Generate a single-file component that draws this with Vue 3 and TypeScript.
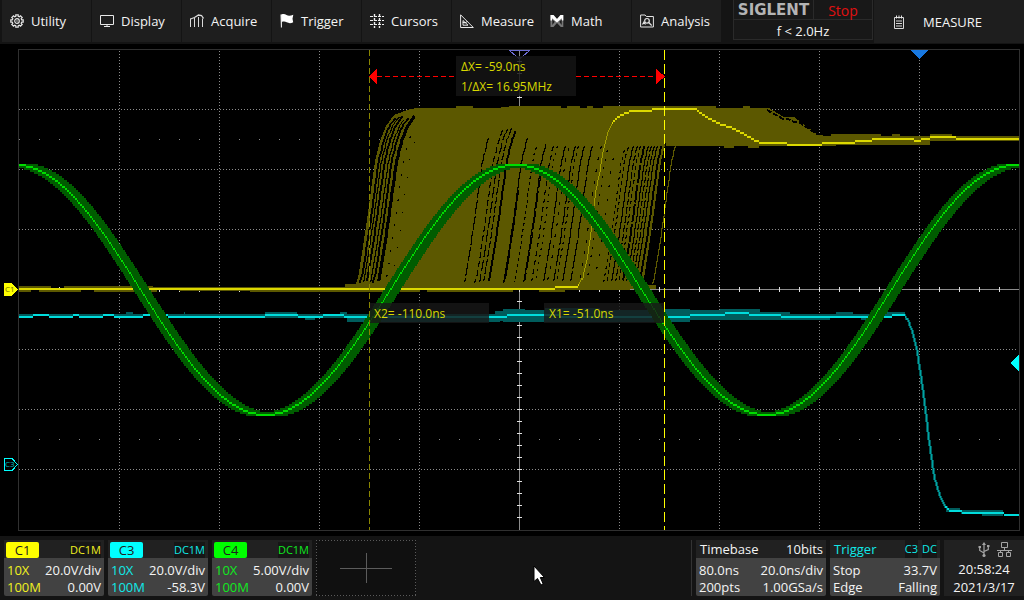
<script setup lang="ts">
type Point = [number, number]
type Rect = [number, number, number, number]

interface Channel {
  id: string
  tone: string
  coupling: string
  probe: string
  scale: string
  bandwidth: string
  offset: string
}

const menu = ['Utility', 'Display', 'Acquire', 'Trigger', 'Cursors', 'Measure', 'Math', 'Analysis']

const channels: Channel[] = [
  { id: 'C1', tone: 'yellow', coupling: 'DC1M', probe: '10X', scale: '20.0V/div', bandwidth: '100M', offset: '0.00V' },
  { id: 'C3', tone: 'cyan', coupling: 'DC1M', probe: '10X', scale: '20.0V/div', bandwidth: '100M', offset: '-58.3V' },
  { id: 'C4', tone: 'green', coupling: 'DC1M', probe: '10X', scale: '5.00V/div', bandwidth: '100M', offset: '0.00V' },
]

const range = (from: number, to: number, step: number): number[] => {
  const out: number[] = []
  for (let v = from; v <= to; v += step) out.push(v)
  return out
}

const columns = [119, 219, 319, 419, 619, 719, 819, 919]
const rows = [109, 169, 229, 349, 409, 469]
const hTicks = range(39, 1000, 20)
const vTicks = range(61, 526, 12)

const snap = (v: number): number => Math.round(v / 2) * 2

// Samples are drawn one column at a time, two pixels high at least.
function trace(f: (x: number) => number, from: number, to: number): string {
  let d = ''
  for (let x = from; x < to; x++) {
    const a = snap(f(x))
    const b = snap(f(x + 1))
    const top = Math.min(a, b)
    const h = Math.max(2, Math.abs(a - b))
    d += `M${x} ${top}h1v${h}h-1z`
  }
  return d
}

function interpolate(points: Point[]): (x: number) => number {
  return (x: number) => {
    if (x <= points[0][0]) return points[0][1]
    for (let i = 1; i < points.length; i++) {
      const [x0, y0] = points[i - 1]
      const [x1, y1] = points[i]
      if (x <= x1) return y0 + ((y1 - y0) * (x - x0)) / (x1 - x0)
    }
    return points[points.length - 1][1]
  }
}

const boxes = (list: Rect[]): string =>
  list.map(([x0, x1, y0, y1]) => `M${x0} ${y0}H${x1}V${y1}H${x0}z`).join('')

// C4: sine wave with jitter band
const sine = (x: number): number => 289 - 125 * Math.cos(((x - 516) * 2 * Math.PI) / 501)
const sineLine = trace(sine, 19, 1019)
const sineBand = (() => {
  let d = ''
  for (let x = 19; x < 1019; x++) {
    let lo = Infinity
    let hi = -Infinity
    for (let s = -6; s <= 8; s++) {
      const y = sine(x - s)
      lo = Math.min(lo, y)
      hi = Math.max(hi, y)
    }
    const a = snap(lo - 1)
    const b = snap(hi + 3)
    d += `M${x} ${a}h1V${b}h-1z`
  }
  return d
})()

// C1: step edge
const c1Points: Point[] = [
  [555, 288], [556, 286], [578, 286], [583, 277], [587, 260], [590, 240], [593, 215], [596, 190], [600, 171],
  [603, 151], [608, 132], [613, 122], [618, 116], [626, 112], [633, 110], [652, 110], [653, 108], [695, 108],
  [703, 114], [713, 120], [720, 123], [732, 127], [742, 132], [755, 140], [762, 142], [786, 142], [787, 144],
  [822, 144], [823, 142], [855, 142], [856, 140], [872, 140], [873, 138], [913, 138], [914, 140], [921, 140],
  [922, 138], [930, 138], [931, 136], [955, 136], [956, 138], [1019, 138],
]
const c1 = interpolate(c1Points)
const c1Flat = trace(c1, 19, 579)
const c1Rise = trace(c1, 579, 612)
const c1Top = trace(c1, 612, 1019)

// Horizontal shift of a rising edge at each height
const edge: Point[] = [
  [55, 109], [39, 115], [31, 126], [25, 141], [20, 161], [16, 190], [12, 220], [7, 253], [3, 278], [0, 286],
]
const edgeShift = (y: number): number => {
  for (let i = 1; i < edge.length; i++) {
    const [d0, y0] = edge[i - 1]
    const [d1, y1] = edge[i]
    if (y <= y1) return d0 + ((d1 - d0) * (y - y0)) / (y1 - y0)
  }
  return 0
}
const stroke = (base: number, top: number, bottom: number): string => {
  let d = ''
  for (let y = top; y <= bottom; y += 3) d += `${d ? 'L' : 'M'}${Math.round(base + edgeShift(y))}.5 ${y}`
  return d
}

const leftEdge = edge.slice().reverse().map(([d, y]) => `${355 + d} ${y}`).join('L')
const rightEdge = edge.slice(3).map(([d, y]) => `${641 + d} ${y}`).join('L')
const cloud =
  `M${leftEdge}L417 108H456V106H473V108H501V107H509V106H561V108H567V106H580V108H587V106H593V108H603V106` +
  `H716V108H743V106H750V108H769L784 117H794L818 135H823V146H672L666 146L${rightEdge}z`

interface Gap {
  d: string
  width: number
  dash: string
}
const gap = (base: number, top: number, width = 1, dash = 'none', bottom = 283): Gap => ({
  d: stroke(base, top, bottom),
  width,
  dash,
})
const gaps: Gap[] = [
  gap(358, 118, 2), gap(361, 117, 1), gap(364, 116, 2), gap(368, 120, 1), gap(371, 118, 2), gap(376, 116, 3),
  gap(383, 136, 1, '2 11'), gap(389, 142, 1, '1 17'),
  gap(462, 138, 1, '14 2'), gap(473, 130, 1, '6 3'), gap(477, 129, 1, '12 3'), gap(481, 128, 1, '7 2'),
  gap(486, 131, 2), gap(501, 138, 1), gap(502, 190, 1), gap(512, 147, 1, '3 3'), gap(521, 144, 1),
  gap(522, 170, 1, '18 3'), gap(529, 146, 1, '5 4'), gap(533, 146, 1, '2 5'), gap(541, 146, 1, '22 2'),
  gap(545, 148, 1, '3 8'), gap(551, 146, 1, '18 3'), gap(554, 146, 1, '3 4'), gap(560, 146, 1),
  gap(568, 146, 1, '30 2'), gap(577, 146, 1, '3 9'), gap(584, 150, 1, '2 7'), gap(592, 158, 1, '2 12'),
  gap(601, 150, 1, '3 4'), gap(604, 147, 1, '4 3'), gap(609, 146, 1), gap(613, 146, 1, '7 2'),
  gap(616, 146, 1, '4 3'), gap(620, 146, 2, '18 2'), gap(624, 146, 1), gap(627, 146, 1, '6 2'),
  gap(630, 146, 1, '9 2'), gap(633, 146, 1), gap(637, 146, 2),
]
const lastEdge = stroke(651, 146, 286)

const c1Bands = boxes([
  [19, 51, 286, 288], [64, 153, 286, 288], [19, 31, 290, 292], [39, 81, 290, 292], [94, 157, 290, 292],
  [179, 250, 290, 291], [153, 345, 287, 288], [250, 420, 290, 292], [345, 556, 284, 288], [427, 513, 290, 292],
  [513, 630, 286, 290], [539, 565, 290, 292], [600, 656, 285, 289], [724, 734, 146, 148], [748, 759, 146, 148],
  [818, 831, 136, 146], [831, 836, 134, 146], [836, 848, 134, 145], [848, 881, 134, 145], [881, 913, 136, 145],
  [892, 900, 134, 136], [913, 930, 136, 145], [930, 952, 134, 141], [952, 1019, 136, 141],
])

// C3: low ripple followed by a falling edge
const c3 = interpolate([
  [33, 316], [34, 314], [48, 314], [49, 316], [73, 316], [74, 314], [78, 314], [79, 316], [103, 316], [104, 314],
  [113, 314], [114, 316], [143, 316], [144, 314], [167, 314], [168, 316], [265, 316], [266, 314], [297, 314],
  [298, 316], [323, 316], [324, 314], [343, 314], [344, 316], [507, 316], [508, 314], [558, 314], [559, 316],
  [690, 316], [691, 314], [725, 314], [726, 312], [748, 312], [749, 314], [780, 314], [781, 316], [892, 316],
  [893, 314], [904, 314], [908, 320], [913, 333], [917, 350], [920, 370], [923, 390], [926, 413], [929, 440],
  [933, 467], [935, 479], [938, 490], [941, 498], [945, 505], [950, 510], [961, 510], [962, 512], [1003, 512],
  [1004, 514], [1019, 514],
])
const c3Line = trace(c3, 19, 905)
const c3Fall = trace(c3, 905, 945)
const c3Low = trace(c3, 945, 1019)
const c3Glow = trace((x) => c3(x - 1), 905, 962) + trace((x) => c3(x + 1), 905, 962)
const c3Bands = boxes([
  [19, 265, 314, 316], [126, 133, 312, 314], [184, 185, 312, 314], [265, 297, 312, 318], [297, 340, 314, 318],
  [305, 315, 318, 320], [340, 347, 312, 318], [347, 500, 314, 322], [495, 503, 311, 321], [503, 525, 309, 322],
  [525, 545, 310, 322], [545, 600, 308, 322], [600, 664, 310, 322], [664, 690, 309, 322], [690, 720, 310, 320],
  [720, 760, 309, 320], [760, 790, 312, 320], [790, 830, 314, 320], [836, 853, 312, 316], [830, 904, 314, 316],
  [861, 866, 318, 320], [887, 905, 312, 316], [946, 960, 508, 512], [960, 1003, 510, 512], [982, 1003, 514, 516],
])
</script>

<template>
  <div class="scope">
    <header class="top">
      <nav class="menu" aria-label="Main menu">
        <button v-for="name in menu" :key="name" type="button" class="menu-item">
          <svg class="icon" viewBox="0 0 14 14" aria-hidden="true">
            <g v-if="name === 'Utility'" fill="none" stroke="#e4e4e4">
              <path stroke-width="1.200" d="M5.8.8h2.4v1.5l1.2.5 1.1-1 1.7 1.7-1 1.1.5 1.2h1.5v2.4h-1.5l-.5 1.2 1 1.1-1.7 1.7-1.1-1-1.2.5v1.5H5.8v-1.5l-1.2-.5-1.1 1-1.7-1.7 1-1.1-.5-1.2H.8V5.8h1.5l.5-1.2-1-1.1 1.7-1.7 1.1 1 1.2-.5z" />
              <circle cx="7" cy="7" r="2.3" stroke-width="1.200" />
              <circle cx="7" cy="7" r=".7" fill="#e4e4e4" stroke="none" />
            </g>
            <g v-else-if="name === 'Display'" fill="none" stroke="#e8e8e8">
              <path d="M.5 1.5h13v9H.5z" />
              <path d="M7 10.5v2M4 12.5h6" />
            </g>
            <g v-else-if="name === 'Acquire'" fill="none" stroke="#dadada">
              <path d="M.5 13V4.500M4.500 13V4M8.500 13V3M12.500 13V4.500" />
              <path d="M.5 5l4-1.500 4-2.500 3 .5 2 3" stroke-width="1.300" />
            </g>
            <g v-else-if="name === 'Trigger'">
              <path d="M.5.5h1.400v13H.9z" fill="#fff" />
              <path d="M1.500.6c2-1 3.500-.4 5 .5 2 1 4 .8 6.800-.4l-.8 4 .7 3.600c-2.500 1.200-4.500 1-6.500 0-1.500-.8-3-1-5-.2z" fill="#fff" />
            </g>
            <g v-else-if="name === 'Cursors'" fill="none" stroke="#f0f0f0">
              <path d="M4.500 0v14M9.500 0v14" stroke-width="1.400" stroke-dasharray="3 1" />
              <path d="M0 2.500h14M0 6.500h14M0 10.500h14" stroke-width="1.200" stroke-dasharray="3 1" />
            </g>
            <g v-else-if="name === 'Measure'" fill="none" stroke="#e8e8e8">
              <path d="M.6.8v12.700h12.700z" />
              <path d="M3 6.500v4.700h5zM4.500 9l3-1.500M2.800 8.500h2.500" />
            </g>
            <g v-else-if="name === 'Math'">
              <path d="M.5 1h3L7 5l3.500-4h2.800v12h-2.500L7 9l-3.500 4h-3z" fill="#777" />
              <path d="M.5 1h3L7 5l3.500-4h2.800v5.500h-1.500V4.200L7 8.500 2 4.200v2.300H.5z" fill="#fff" />
              <path d="M2.300 5.500v5.500l2.500-3.200zM11.700 5.500v5.500L9.200 7.800z" fill="#1e1e1e" />
            </g>
            <g v-else fill="none" stroke="#e4e4e4">
              <path d="M.6 13V1h4.500l1.300 1.500h7v10.500z" />
              <circle cx="7" cy="6.800" r="2.300" stroke-width="1.200" />
              <path d="M8.700 8.500l3 3M2.500 10.500l1.500-2.500 1.500 2.500" stroke-width="1.200" />
            </g>
          </svg>
          <span>{{ name }}</span>
        </button>
      </nav>
      <section class="status">
        <span class="brand">SIGLENT</span>
        <span class="run-state">Stop</span>
        <span class="frequency">f &lt; 2.0Hz</span>
      </section>
      <button type="button" class="panel-title">
        <svg class="pad" viewBox="0 0 10 14" aria-hidden="true">
          <path d="M.5 2.500h9v11h-9z" fill="none" stroke="#d8d8d8" />
          <path d="M2.500.5v3M5 .5v3M7.500.5v3" stroke="#e8e8e8" />
          <path d="M2 6h6M2 8.500h6M2 11h6" stroke="#d8d8d8" />
        </svg>
        <span>MEASURE</span>
      </button>
    </header>

    <svg class="display" viewBox="0 44 1024 492" role="img" aria-label="Waveform display">
      <g shape-rendering="crispEdges">
        <rect x="0" y="44" width="1024" height="492" fill="#000" />
        <path d="M18.500 49.500H1019.500V530.500H18.500z" fill="none" stroke="#303030" />

        <g stroke="#8c8c8c" stroke-dasharray="1 2">
          <path v-for="x in columns" :key="x" :d="`M${x}.5 51V530`" />
          <path v-for="y in rows" :key="y" :d="`M19 ${y}.5H1018`" />
        </g>
        <path d="M19 139.500H1018M19 439.500H1018" stroke="#8c8c8c" stroke-dasharray="1 19" />
        <path d="M19 289.500H1019M519.500 50V530" stroke="#8c8c8c" />
        <g stroke="#e0e0e0">
          <path v-for="x in hTicks" :key="x" :d="`M${x}.5 287v5`" />
          <path v-for="y in vTicks" :key="y" :d="`M517 ${y}.5h5`" />
        </g>
        <path d="M509.500 50.500H529.500L519.500 59z" fill="none" stroke="#6c6cd0" />

        <path :d="cloud" fill="#5c5800" />
        <g fill="none" stroke="#000">
          <path v-for="(g, i) in gaps" :key="i" :d="g.d" :stroke-width="g.width" :stroke-dasharray="g.dash" />
        </g>
        <path :d="lastEdge" fill="none" stroke="#5c5800" />
        <path d="M767 110l16 9h5l6 3h5l18 12" fill="none" stroke="#000" stroke-width="2" stroke-dasharray="5 2" />
        <path :d="c1Bands" fill="#5c5800" />
        <path :d="c1Flat + c1Top" fill="#dcd800" />
        <path :d="c1Rise" fill="#a09c00" />

        <path :d="c3Bands + c3Glow" fill="#005c5c" />
        <path :d="c3Line + c3Low" fill="#00dcdc" />
        <path :d="c3Fall" fill="#00a4a4" />

        <path :d="sineBand" fill="#005c00" />
        <path :d="sineLine" fill="#00dc00" />

        <path d="M369.500 50V530" stroke="#888400" stroke-dasharray="6 3" />
        <path d="M664.500 50V530" stroke="#ffff00" stroke-dasharray="10 4" />
        <path d="M377 76.500H456M576 76.500H656" stroke="#ff0000" stroke-dasharray="5 3" />
        <path d="M369 76.500L377 69V84zM665 76.500L656 69V84z" fill="#ff0000" />
        <path d="M910 50H929L919.500 59z" fill="#1878e0" />
        <path d="M1019 355V371L1010 363z" fill="#00ffff" />
        <path d="M4 283H12L18 289.500L12 296H4z" fill="#ffff00" />
        <path d="M4.500 458.500H12L17.500 464.500L12 470.500H4.500z" fill="#000" stroke="#00ffff" />

        <rect x="456" y="56" width="120" height="40" fill="#141414" fill-opacity=".85" />
        <rect x="370" y="303" width="119" height="20" fill="#181818" fill-opacity=".8" />
        <rect x="544" y="303" width="120" height="20" fill="#181818" fill-opacity=".8" />
      </g>
      <g class="readout">
        <text x="461" y="71">ΔX= -59.0ns</text>
        <text x="461" y="91">1/ΔX= 16.95MHz</text>
        <text x="374" y="318">X2= -110.0ns</text>
        <text x="549" y="318">X1= -51.0ns</text>
      </g>
      <text class="marker" x="5" y="292" fill="#6c6c00">C1</text>
      <text class="marker" x="5" y="467" fill="#00c0c0">C3</text>
    </svg>

    <footer class="bottom">
      <button v-for="c in channels" :key="c.id" type="button" class="card channel" :class="c.tone">
        <span class="card-head">
          <span class="tag">{{ c.id }}</span>
          <span class="coupling">{{ c.coupling }}</span>
        </span>
        <span class="card-row"><span class="tint">{{ c.probe }}</span><span>{{ c.scale }}</span></span>
        <span class="card-row"><span class="tint">{{ c.bandwidth }}</span><span>{{ c.offset }}</span></span>
      </button>
      <button type="button" class="add" aria-label="Add channel">
        <svg viewBox="0 0 100 56" aria-hidden="true" shape-rendering="crispEdges">
          <path d="M0 .5H100M0 55H100M.5 0V56M99 0V56" stroke="#5a5a5a" stroke-dasharray="1 2" />
          <path d="M24 28.500H76M50.500 13V43" stroke="#5c5c5c" />
        </svg>
      </button>
      <div class="space">
        <svg class="pointer" viewBox="0 0 12 21" aria-hidden="true">
          <path d="M1 1V16.500L4.500 13.500L8 20L10.200 19L7.300 12.500H11.500z" fill="#fff" stroke="#000" />
        </svg>
      </div>
      <button type="button" class="card timebase">
        <span class="card-head"><span>Timebase</span><span>10bits</span></span>
        <span class="card-row"><span>80.0ns</span><span>20.0ns/div</span></span>
        <span class="card-row"><span>200pts</span><span>1.00GSa/s</span></span>
      </button>
      <button type="button" class="card trigger cyan">
        <span class="card-head">
          <span class="tint">Trigger</span>
          <span class="source"><span>C3</span><span>DC</span></span>
        </span>
        <span class="card-row"><span>Stop</span><span>33.7V</span></span>
        <span class="card-row"><span>Edge</span><span>Falling</span></span>
      </button>
      <section class="clock">
        <div class="links">
          <svg class="usb" viewBox="0 0 12 16" fill="none" stroke="#a4a4a4" aria-hidden="true">
            <path d="M6 2v11M6 11L1.700 8.500V5.500M6 9.500L10.300 7.500V4.500" stroke-width="1.200" />
            <path d="M6 0L8 3H4zM.5 4h2.500v2H.5zM9 3h2.500v2H9z" fill="#a4a4a4" stroke="none" />
            <circle cx="6" cy="13.500" r="1.600" fill="#a4a4a4" stroke="none" />
          </svg>
          <svg class="lan" viewBox="0 0 15 16" fill="none" stroke="#a4a4a4" aria-hidden="true">
            <path d="M4.500.5h6v5h-6zM1.500 10.500h4v4h-4zM9.500 10.500h4v4h-4zM7.500 5.500v2.500M0 8.500h15M3.500 8.500v2M11.500 8.500v2" />
          </svg>
        </div>
        <time>20:58:24</time>
        <time>2021/3/17</time>
      </section>
    </footer>
  </div>
</template>

<style>
body {
  background: #000;
}
</style>

<style scoped>
.scope {
  display: flex;
  flex-direction: column;
  min-height: 100vh;
  background: #000;
  color: #f4f4f4;
  font-family: "Open Sans", "Noto Sans", sans-serif;
  font-size: 13px;
  line-height: 16px;
}
button {
  margin: 0;
  padding: 0;
  border: 0;
  background: none;
  color: inherit;
  font: inherit;
  text-align: left;
}
.top {
  display: grid;
  grid-template-columns: minmax(0, 733fr) 140px minmax(0, 151fr);
  align-items: start;
  height: 44px;
  background: #141414;
}
.menu {
  display: flex;
  margin: 0 11px 0 2px;
}
.menu-item {
  display: flex;
  flex: 1;
  align-items: center;
  gap: 7px;
  height: 42px;
  padding-left: 8px;
  border-right: 1px solid #141414;
  background: #1e1e1e;
}
.icon {
  flex: none;
  width: 14px;
  height: 14px;
}
.status {
  display: grid;
  grid-template-columns: 79px 1fr;
  grid-template-rows: 19px 19px;
  gap: 1px;
  border: 1px solid #2a2a2a;
  border-top: 0;
  background: #2a2a2a;
  text-align: center;
}
.status span {
  background: #181818;
}
.status .brand {
  color: #b4b4b4;
  font-family: "DejaVu Sans", sans-serif;
  font-size: 15px;
  font-weight: bold;
  line-height: 20px;
}
.status .run-state {
  color: #e01010;
  font-size: 14px;
  line-height: 22px;
}
.status .frequency {
  grid-column: 1 / 3;
  line-height: 22px;
}
.panel-title {
  display: flex;
  align-items: center;
  gap: 19px;
  height: 43px;
  margin-left: 1px;
  padding-left: 20px;
  background: #1e1e1e;
}
.pad {
  width: 10px;
  height: 14px;
}
.display {
  display: block;
  width: 100%;
}
.readout {
  fill: #d8d800;
  font-size: 12px;
}
.marker {
  font-size: 8px;
}
.bottom {
  display: flex;
  flex: 1;
  gap: 4px;
  padding: 4px 0 4px 4px;
  background: #141414;
}
.card {
  display: flex;
  flex: none;
  flex-direction: column;
  width: 100px;
  height: 56px;
  border-radius: 2px;
  background: #424242;
}
.card-head,
.card-row {
  display: flex;
  justify-content: space-between;
  padding: 0 3px;
}
.card-head {
  height: 18px;
  margin-bottom: 4px;
  padding-left: 4px;
  background: #212121;
  line-height: 18px;
}
.card-row {
  height: 17px;
  line-height: 17px;
}
.channel .card-head {
  padding: 2px 3px 0 2px;
  height: 16px;
  line-height: 16px;
}
.tag {
  width: 33px;
  border-radius: 2px;
  color: #202020;
  text-align: center;
}
.coupling {
  background: #161616;
  font-size: 11px;
}
.yellow .tag {
  background: #ffff00;
}
.cyan .tag {
  background: #00ffff;
}
.green .tag {
  background: #00ff00;
}
.yellow .tint,
.yellow .coupling {
  color: #f0f020;
}
.cyan .tint,
.cyan .coupling,
.cyan .source {
  color: #10e8e8;
}
.green .tint,
.green .coupling {
  color: #10e820;
}
.add {
  flex: none;
  width: 100px;
  height: 56px;
  background: #101010;
}
.add svg {
  display: block;
  width: 100px;
  height: 56px;
}
.space {
  position: relative;
  flex: 1;
  border-right: 1px solid #333;
}
.pointer {
  position: absolute;
  top: 25px;
  left: 113px;
  width: 12px;
  height: 21px;
}
.timebase {
  width: 130px;
}
.trigger {
  width: 110px;
}
.source {
  display: flex;
  gap: 4px;
  font-size: 11px;
}
.source span {
  background: #161616;
}
.clock {
  display: flex;
  flex: none;
  flex-direction: column;
  align-items: center;
  width: 80px;
  height: 56px;
  background: #212121;
}
.links {
  display: flex;
  gap: 7px;
  height: 20px;
  padding: 2px 0 0 22px;
}
.usb {
  width: 12px;
  height: 16px;
}
.lan {
  width: 15px;
  height: 16px;
}
.clock time {
  height: 18px;
  line-height: 18px;
}
</style>
